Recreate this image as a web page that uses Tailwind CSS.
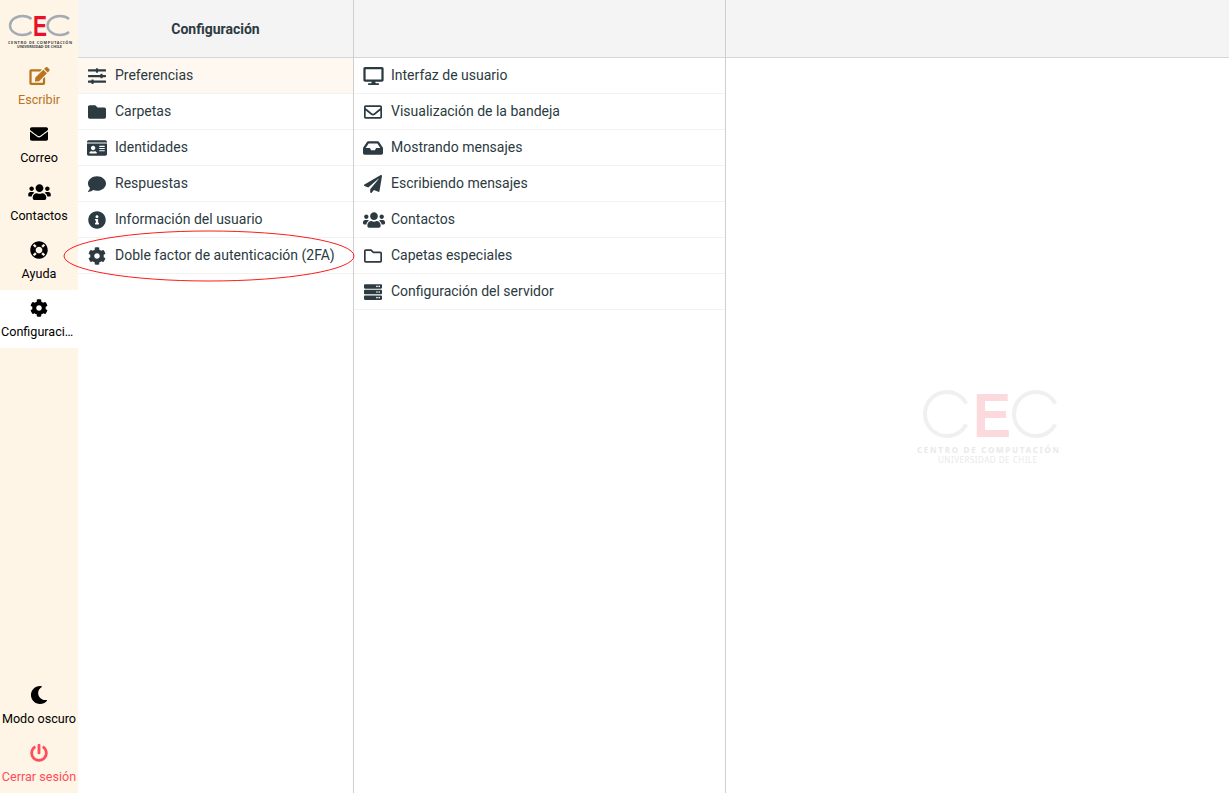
<!DOCTYPE html>
<html lang="es">
<head>
    <meta charset="UTF-8">
    <meta name="viewport" content="width=device-width, initial-scale=1.0">
    <title>Configuración</title>
    <script src="https://cdn.jsdelivr.net/npm/@tailwindcss/browser@4"></script>
</head>
<body class="h-screen overflow-hidden flex bg-white font-['Roboto',sans-serif] text-[14px] text-[#2c3a41]">

    <!-- Sidebar -->
    <aside class="w-[78px] h-full shrink-0 flex flex-col bg-[#fff5e6] text-[12.6px] text-black">
        <div class="h-[58px] pt-[15px] pl-[8px]">
            <svg class="w-[64px] h-[34px] overflow-visible" viewBox="0 0 64 34" fill="none">
                <ellipse cx="14.5" cy="10.5" rx="12.5" ry="9.5" stroke="#a3abb3" stroke-width="2.4" pathLength="100" stroke-dasharray="78 22" stroke-dashoffset="-11"/>
                <text x="32" y="20.5" text-anchor="middle" font-family="Liberation Sans" font-weight="700" font-size="29" fill="#e8112d" textLength="14" lengthAdjust="spacingAndGlyphs">E</text>
                <ellipse cx="52" cy="10.5" rx="12.5" ry="9.5" stroke="#a3abb3" stroke-width="2.4" pathLength="100" stroke-dasharray="78 22" stroke-dashoffset="-11"/>
                <text x="0" y="28.5" font-family="Noto Sans" font-weight="700" font-size="3.8" fill="#3a3f44" textLength="64">CENTRO DE COMPUTACIÓN</text>
                <text x="9" y="33" font-family="Noto Sans" font-weight="700" font-size="3.8" fill="#3a3f44" textLength="45">UNIVERSIDAD DE CHILE</text>
            </svg>
        </div>
        <a class="h-[58px] flex flex-col items-center pt-[9px] text-[#b8741f]">
            <svg class="h-[18px] w-[21px]" viewBox="0 0 576 512" fill="currentColor"><path d="M402.6 83.2l90.2 90.2c3.8 3.8 3.8 10 0 13.8L274.4 405.6l-92.8 10.3c-12.4 1.4-22.9-9.1-21.5-21.5l10.3-92.8L388.8 83.2c3.8-3.8 10-3.8 13.8 0zm162-22.9l-48.8-48.8c-15.2-15.2-39.9-15.2-55.2 0l-35.4 35.4c-3.8 3.8-3.8 10 0 13.8l90.2 90.2c3.8 3.8 10 3.8 13.8 0l35.4-35.4c15.2-15.3 15.2-40 0-55.2zM384 346.2V448H64V128h229.8c3.2 0 6.2-1.3 8.5-3.5l40-40c7.6-7.6 2.2-20.5-8.5-20.5H48C21.5 64 0 85.5 0 112v352c0 26.5 21.5 48 48 48h352c26.5 0 48-21.5 48-48V306.2c0-10.7-12.9-16-20.5-8.5l-40 40c-2.2 2.3-3.5 5.3-3.5 8.5z"/></svg>
            <span class="mt-[6px] leading-[18px]">Escribir</span>
        </a>
        <a class="h-[58px] flex flex-col items-center pt-[9px]">
            <svg class="h-[18px] w-[18px]" viewBox="0 0 512 512" fill="currentColor"><path d="M502.3 190.8c3.9-3.1 9.7-.2 9.7 4.7V400c0 26.5-21.5 48-48 48H48c-26.5 0-48-21.5-48-48V195.6c0-5 5.7-7.8 9.7-4.7 22.4 17.4 52.1 39.5 154.1 113.6 21.1 15.4 56.7 47.8 92.2 47.6 35.7.3 72-32.8 92.3-47.6 102-74.1 131.6-96.3 154-113.7zM256 320c23.2.4 56.6-29.2 73.4-41.4 132.7-96.3 142.8-104.7 173.4-128.7 5.8-4.5 9.2-11.5 9.2-18.9v-19c0-26.5-21.5-48-48-48H48C21.5 64 0 85.5 0 112v19c0 7.4 3.4 14.3 9.2 18.9 30.6 23.9 40.7 32.4 173.4 128.7 16.8 12.2 50.2 41.8 73.4 41.4z"/></svg>
            <span class="mt-[6px] leading-[18px]">Correo</span>
        </a>
        <a class="h-[58px] flex flex-col items-center pt-[9px]">
            <svg class="h-[18px] w-[23px]" viewBox="0 0 640 512" fill="currentColor"><path d="M96 224c35.3 0 64-28.7 64-64s-28.7-64-64-64-64 28.7-64 64 28.7 64 64 64zm448 0c35.3 0 64-28.7 64-64s-28.7-64-64-64-64 28.7-64 64 28.7 64 64 64zm32 32h-64c-17.6 0-33.5 7.1-45.1 18.6 40.3 22.1 68.9 62 75.1 109.4h66c17.7 0 32-14.3 32-32v-32c0-35.3-28.7-64-64-64zm-256 0c61.9 0 112-50.1 112-112S381.9 32 320 32 208 82.1 208 144s50.1 112 112 112zm76.8 32h-8.3c-20.8 10-43.9 16-68.5 16s-47.6-6-68.5-16h-8.3C179.6 288 128 339.6 128 403.2V432c0 26.5 21.5 48 48 48h288c26.5 0 48-21.5 48-48v-28.8c0-63.6-51.6-115.2-115.2-115.2zm-223.7-13.4C161.5 263.1 145.6 256 128 256H64c-35.3 0-64 28.7-64 64v32c0 17.7 14.3 32 32 32h65.9c6.3-47.4 34.9-87.3 75.2-109.4z"/></svg>
            <span class="mt-[6px] leading-[18px]">Contactos</span>
        </a>
        <a class="h-[58px] flex flex-col items-center pt-[9px]">
            <svg class="h-[18px] w-[18px]" viewBox="0 0 512 512" fill="currentColor"><path d="M256 8C119.033 8 8 119.033 8 256s111.033 248 248 248 248-111.033 248-248S392.967 8 256 8zm173.696 119.559l-63.399 63.399c-10.987-18.559-26.67-34.252-45.255-45.255l63.399-63.399a218.396 218.396 0 0 1 45.255 45.255zM256 352c-53.019 0-96-42.981-96-96s42.981-96 96-96 96 42.981 96 96-42.981 96-96 96zM127.559 82.304l63.399 63.399c-18.559 10.987-34.252 26.67-45.255 45.255l-63.399-63.399a218.372 218.372 0 0 1 45.255-45.255zM82.304 384.441l63.399-63.399c10.987 18.559 26.67 34.252 45.255 45.255l-63.399 63.399a218.396 218.396 0 0 1-45.255-45.255zm302.137 45.255l-63.399-63.399c18.559-10.987 34.252-26.67 45.255-45.255l63.399 63.399a218.403 218.403 0 0 1-45.255 45.255z"/></svg>
            <span class="mt-[6px] leading-[18px]">Ayuda</span>
        </a>
        <a class="h-[58px] flex flex-col items-center pt-[9px] bg-white">
            <svg class="h-[18px] w-[18px]" viewBox="0 0 512 512" fill="currentColor"><path d="M487.4 315.7l-42.6-24.6c4.3-23.2 4.3-47 0-70.2l42.6-24.6c4.9-2.8 7.1-8.6 5.5-14-11.1-35.6-30-67.8-54.7-94.6-3.8-4.1-10-5.1-14.8-2.3L380.8 110c-17.9-15.4-38.5-27.3-60.8-35.1V25.8c0-5.6-3.9-10.5-9.4-11.7-36.7-8.2-74.3-7.8-109.2 0-5.5 1.2-9.4 6.1-9.4 11.7V75c-22.2 7.9-42.8 19.8-60.8 35.1L88.7 85.5c-4.9-2.8-11-1.9-14.8 2.3-24.7 26.7-43.6 58.9-54.7 94.6-1.7 5.4.6 11.2 5.5 14L67.3 221c-4.3 23.2-4.3 47 0 70.2l-42.6 24.6c-4.9 2.8-7.1 8.6-5.5 14 11.1 35.6 30 67.8 54.7 94.6 3.8 4.1 10 5.1 14.8 2.3l42.6-24.6c17.9 15.4 38.5 27.3 60.8 35.1v49.2c0 5.6 3.9 10.5 9.4 11.7 36.7 8.2 74.3 7.8 109.2 0 5.5-1.2 9.4-6.1 9.4-11.7v-49.2c22.2-7.9 42.8-19.8 60.8-35.1l42.6 24.6c4.9 2.8 11 1.9 14.8-2.3 24.7-26.7 43.6-58.9 54.7-94.6 1.5-5.5-.7-11.3-5.6-14.1zM256 336c-44.1 0-80-35.9-80-80s35.9-80 80-80 80 35.9 80 80-35.9 80-80 80z"/></svg>
            <span class="mt-[6px] leading-[18px] w-full px-[1px] text-center truncate">Configuración</span>
        </a>
        <a class="mt-auto h-[58px] flex flex-col items-center pt-[9px]">
            <svg class="h-[18px] w-[18px]" viewBox="0 0 512 512" fill="currentColor"><path d="M283.211 512c78.962 0 151.079-35.925 198.857-94.792 7.068-8.708-.639-21.43-11.562-19.35-124.203 23.654-238.262-71.576-238.262-196.954 0-72.222 38.662-138.635 101.498-174.394 9.686-5.512 7.25-20.197-3.756-22.23A258.156 258.156 0 0 0 283.211 0c-141.309 0-256 114.511-256 256 0 141.309 114.511 256 256 256z"/></svg>
            <span class="mt-[6px] leading-[18px] whitespace-nowrap">Modo oscuro</span>
        </a>
        <a class="h-[58px] flex flex-col items-center pt-[9px] text-[#ff4d5a]">
            <svg class="h-[18px] w-[18px]" viewBox="0 0 512 512" fill="currentColor"><path d="M400 54.1c63 45 104 118.6 104 201.9 0 136.8-110.8 247.7-247.5 248C120 504.3 8.2 393 8 256.4 7.9 173.1 48.9 99.3 111.8 54.2c11.7-8.3 28-4.8 35 7.7L162.6 90c5.9 10.5 3.1 23.8-6.6 31-41.5 30.8-68 79.6-68 134.9-.1 92.3 74.5 168.1 168 168.1 91.6 0 168.6-74.2 168-169.1-.3-51.8-24.7-101.8-68.1-134-9.7-7.2-12.4-20.5-6.5-30.9l15.8-28.1c7-12.4 23.2-16.1 34.8-7.8zM296 264V24c0-13.3-10.7-24-24-24h-32c-13.3 0-24 10.7-24 24v240c0 13.3 10.7 24 24 24h32c13.3 0 24-10.7 24-24z"/></svg>
            <span class="mt-[6px] leading-[18px] whitespace-nowrap">Cerrar sesión</span>
        </a>
    </aside>

    <!-- First list -->
    <section class="relative w-[276px] h-full shrink-0 flex flex-col border-r border-[#cfcfcf]">
        <header class="h-[58px] shrink-0 flex items-center justify-center pt-[2px] bg-[#f4f4f4] border-b border-[#d6d6d6] font-bold">Configuración</header>
        <ul>
            <li class="h-[36px] flex items-center pl-[10px] border-b border-[#f2f2f2] bg-[#fff8f0]">
                <span class="w-[27px] shrink-0"><svg class="h-[18px] w-[18px]" viewBox="0 0 512 512" fill="currentColor"><path d="M496 384H160v-16c0-8.8-7.2-16-16-16h-32c-8.8 0-16 7.2-16 16v16H16c-8.8 0-16 7.2-16 16v32c0 8.8 7.2 16 16 16h80v16c0 8.8 7.2 16 16 16h32c8.8 0 16-7.2 16-16v-16h336c8.8 0 16-7.2 16-16v-32c0-8.8-7.2-16-16-16zm0-160h-80v-16c0-8.8-7.2-16-16-16h-32c-8.8 0-16 7.2-16 16v16H16c-8.8 0-16 7.2-16 16v32c0 8.8 7.2 16 16 16h336v16c0 8.8 7.2 16 16 16h32c8.8 0 16-7.2 16-16v-16h80c8.8 0 16-7.2 16-16v-32c0-8.8-7.2-16-16-16zm0-160H288V48c0-8.8-7.2-16-16-16h-32c-8.8 0-16 7.2-16 16v16H16C7.2 64 0 71.2 0 80v32c0 8.8 7.2 16 16 16h208v16c0 8.8 7.2 16 16 16h32c8.8 0 16-7.2 16-16v-16h208c8.8 0 16-7.2 16-16V80c0-8.8-7.2-16-16-16z"/></svg></span>
                Preferencias
            </li>
            <li class="h-[36px] flex items-center pl-[10px] border-b border-[#f2f2f2]">
                <span class="w-[27px] shrink-0"><svg class="h-[18px] w-[18px]" viewBox="0 0 512 512" fill="currentColor"><path d="M464 128H272l-64-64H48C21.49 64 0 85.49 0 112v288c0 26.51 21.49 48 48 48h416c26.51 0 48-21.49 48-48V176c0-26.51-21.49-48-48-48z"/></svg></span>
                Carpetas
            </li>
            <li class="h-[36px] flex items-center pl-[9px] border-b border-[#f2f2f2]">
                <span class="w-[28px] shrink-0"><svg class="h-[18px] w-[20px]" viewBox="0 0 576 512" fill="currentColor"><path d="M528 32H48C21.5 32 0 53.5 0 80v16h576V80c0-26.5-21.5-48-48-48zM0 432c0 26.5 21.5 48 48 48h480c26.5 0 48-21.5 48-48V128H0v304zm352-232c0-4.4 3.6-8 8-8h144c4.4 0 8 3.6 8 8v16c0 4.4-3.6 8-8 8H360c-4.4 0-8-3.6-8-8v-16zm0 64c0-4.4 3.6-8 8-8h144c4.4 0 8 3.6 8 8v16c0 4.4-3.6 8-8 8H360c-4.4 0-8-3.6-8-8v-16zm0 64c0-4.4 3.6-8 8-8h144c4.4 0 8 3.6 8 8v16c0 4.4-3.6 8-8 8H360c-4.4 0-8-3.6-8-8v-16zM176 192c35.3 0 64 28.7 64 64s-28.7 64-64 64-64-28.7-64-64 28.7-64 64-64zM67.1 396.2C75.5 370.5 99.6 352 128 352h8.2c12.3 5.1 25.7 8 39.8 8s27.6-2.9 39.8-8h8.2c28.4 0 52.5 18.5 60.9 44.2 3.2 9.9-5.2 19.8-15.6 19.8H82.7c-10.4 0-18.8-10-15.6-19.8z"/></svg></span>
                Identidades
            </li>
            <li class="h-[36px] flex items-center pl-[10px] border-b border-[#f2f2f2]">
                <span class="w-[27px] shrink-0"><svg class="h-[18px] w-[18px]" viewBox="0 0 512 512" fill="currentColor"><path d="M256 32C114.6 32 0 125.1 0 240c0 49.6 21.4 95 57 130.7C44.5 421.1 2.7 466 2.2 466.5c-2.2 2.3-2.8 5.7-1.5 8.7S4.8 480 8 480c66.3 0 116-31.8 140.6-51.4 32.7 12.3 69 19.4 107.4 19.4 141.4 0 256-93.1 256-208S397.4 32 256 32z"/></svg></span>
                Respuestas
            </li>
            <li class="h-[36px] flex items-center pl-[10px] border-b border-[#f2f2f2]">
                <span class="w-[27px] shrink-0"><svg class="h-[18px] w-[18px]" viewBox="0 0 512 512" fill="currentColor"><path d="M256 8C119.043 8 8 119.083 8 256c0 136.997 111.043 248 248 248s248-111.003 248-248C504 119.083 392.957 8 256 8zm0 110c23.196 0 42 18.804 42 42s-18.804 42-42 42-42-18.804-42-42 18.804-42 42-42zm56 254c0 6.627-5.373 12-12 12h-88c-6.627 0-12-5.373-12-12v-24c0-6.627 5.373-12 12-12h12v-64h-12c-6.627 0-12-5.373-12-12v-24c0-6.627 5.373-12 12-12h64c6.627 0 12 5.373 12 12v100h12c6.627 0 12 5.373 12 12v24z"/></svg></span>
                Información del usuario
            </li>
            <li class="h-[36px] flex items-center pl-[10px] border-b border-[#f2f2f2] whitespace-nowrap">
                <span class="w-[27px] shrink-0"><svg class="h-[18px] w-[18px]" viewBox="0 0 512 512" fill="currentColor"><path d="M487.4 315.7l-42.6-24.6c4.3-23.2 4.3-47 0-70.2l42.6-24.6c4.9-2.8 7.1-8.6 5.5-14-11.1-35.6-30-67.8-54.7-94.6-3.8-4.1-10-5.1-14.8-2.3L380.8 110c-17.9-15.4-38.5-27.3-60.8-35.1V25.8c0-5.6-3.9-10.5-9.4-11.7-36.7-8.2-74.3-7.8-109.2 0-5.5 1.2-9.4 6.1-9.4 11.7V75c-22.2 7.9-42.8 19.8-60.8 35.1L88.7 85.5c-4.9-2.8-11-1.9-14.8 2.3-24.7 26.7-43.6 58.9-54.7 94.6-1.7 5.4.6 11.2 5.5 14L67.3 221c-4.3 23.2-4.3 47 0 70.2l-42.6 24.6c-4.9 2.8-7.1 8.6-5.5 14 11.1 35.6 30 67.8 54.7 94.6 3.8 4.1 10 5.1 14.8 2.3l42.6-24.6c17.9 15.4 38.5 27.3 60.8 35.1v49.2c0 5.6 3.9 10.5 9.4 11.7 36.7 8.2 74.3 7.8 109.2 0 5.5-1.2 9.4-6.1 9.4-11.7v-49.2c22.2-7.9 42.8-19.8 60.8-35.1l42.6 24.6c4.9 2.8 11 1.9 14.8-2.3 24.7-26.7 43.6-58.9 54.7-94.6 1.5-5.5-.7-11.3-5.6-14.1zM256 336c-44.1 0-80-35.9-80-80s35.9-80 80-80 80 35.9 80 80-35.9 80-80 80z"/></svg></span>
                Doble factor de autenticación (2FA)
            </li>
        </ul>
        <!-- red annotation round the 2FA row -->
        <svg class="absolute left-[-15px] top-[230px] w-[292px] h-[52px] overflow-visible pointer-events-none" viewBox="0 0 292 52" fill="none"><ellipse cx="146" cy="26" rx="145" ry="25" stroke="#ff0000" stroke-width="0.9"/></svg>
    </section>

    <!-- Second list -->
    <section class="w-[372px] h-full shrink-0 flex flex-col border-r border-[#cfcfcf]">
        <header class="h-[58px] shrink-0 bg-[#f4f4f4] border-b border-[#d6d6d6]"></header>
        <ul>
            <li class="h-[36px] flex items-center pl-[9px] border-b border-[#f2f2f2]">
                <span class="w-[28px] shrink-0"><svg class="h-[18px] w-[21px]" viewBox="0 0 576 512" fill="currentColor"><path d="M528 0H48C21.5 0 0 21.5 0 48v320c0 26.5 21.5 48 48 48h192l-16 48h-72c-13.3 0-24 10.7-24 24s10.7 24 24 24h272c13.3 0 24-10.7 24-24s-10.7-24-24-24h-72l-16-48h192c26.5 0 48-21.5 48-48V48c0-26.5-21.5-48-48-48zm-16 352H64V64h448v288z"/></svg></span>
                Interfaz de usuario
            </li>
            <li class="h-[36px] flex items-center pl-[10px] border-b border-[#f2f2f2]">
                <span class="w-[27px] shrink-0"><svg class="h-[18px] w-[18px]" viewBox="0 0 512 512" fill="currentColor"><path d="M464 64H48C21.49 64 0 85.49 0 112v288c0 26.51 21.49 48 48 48h416c26.51 0 48-21.49 48-48V112c0-26.51-21.49-48-48-48zm0 48v40.805c-22.422 18.259-58.168 46.651-134.587 106.49-16.841 13.247-50.201 45.072-73.413 44.701-23.208.375-56.579-31.459-73.413-44.701C106.18 199.465 70.425 171.067 48 152.805V112h416zM48 400V214.398c22.914 18.251 55.409 43.862 104.938 82.646 21.857 17.205 60.134 55.186 103.062 54.955 42.717.231 80.509-37.199 103.053-54.947 49.528-38.783 82.032-64.401 104.947-82.653V400H48z"/></svg></span>
                Visualización de la bandeja
            </li>
            <li class="h-[36px] flex items-center pl-[9px] border-b border-[#f2f2f2]">
                <span class="w-[28px] shrink-0"><svg class="h-[18px] w-[20px]" viewBox="0 0 576 512" fill="currentColor"><path d="M567.938 243.908L462.25 85.374A48.003 48.003 0 0 0 422.311 64H153.689a48 48 0 0 0-39.938 21.374L8.062 243.908A47.994 47.994 0 0 0 0 270.533V400c0 26.51 21.49 48 48 48h480c26.51 0 48-21.49 48-48V270.533a47.994 47.994 0 0 0-8.062-26.625zM162.252 128h251.497l85.333 128H376l-32 64H232l-32-64H76.918l85.334-128z"/></svg></span>
                Mostrando mensajes
            </li>
            <li class="h-[36px] flex items-center pl-[10px] border-b border-[#f2f2f2]">
                <span class="w-[27px] shrink-0"><svg class="h-[18px] w-[18px]" viewBox="0 0 512 512" fill="currentColor"><path d="M476 3.2L12.5 270.6c-18.1 10.4-15.8 35.6 2.2 43.2L121 358.4l287.3-253.2c5.5-4.9 13.3 2.6 8.6 8.3L176 407v80.5c0 23.6 28.5 32.9 42.5 15.8L282 426l124.6 52.2c14.2 6 30.4-2.9 33-18.2l72-432C515 7.8 493.3-6.8 476 3.2z"/></svg></span>
                Escribiendo mensajes
            </li>
            <li class="h-[36px] flex items-center pl-[9px] border-b border-[#f2f2f2]">
                <span class="w-[28px] shrink-0"><svg class="h-[18px] w-[22px]" viewBox="0 0 640 512" fill="currentColor"><path d="M96 224c35.3 0 64-28.7 64-64s-28.7-64-64-64-64 28.7-64 64 28.7 64 64 64zm448 0c35.3 0 64-28.7 64-64s-28.7-64-64-64-64 28.7-64 64 28.7 64 64 64zm32 32h-64c-17.6 0-33.5 7.1-45.1 18.6 40.3 22.1 68.9 62 75.1 109.4h66c17.7 0 32-14.3 32-32v-32c0-35.3-28.7-64-64-64zm-256 0c61.9 0 112-50.1 112-112S381.9 32 320 32 208 82.1 208 144s50.1 112 112 112zm76.8 32h-8.3c-20.8 10-43.9 16-68.5 16s-47.6-6-68.5-16h-8.3C179.6 288 128 339.6 128 403.2V432c0 26.5 21.5 48 48 48h288c26.5 0 48-21.5 48-48v-28.8c0-63.6-51.6-115.2-115.2-115.2zm-223.7-13.4C161.5 263.1 145.6 256 128 256H64c-35.3 0-64 28.7-64 64v32c0 17.7 14.3 32 32 32h65.9c6.3-47.4 34.9-87.3 75.2-109.4z"/></svg></span>
                Contactos
            </li>
            <li class="h-[36px] flex items-center pl-[10px] border-b border-[#f2f2f2]">
                <span class="w-[27px] shrink-0"><svg class="h-[18px] w-[18px]" viewBox="0 0 512 512" fill="currentColor"><path d="M464 128H272l-54.63-54.63c-6-6-14.14-9.37-22.63-9.37H48C21.49 64 0 85.49 0 112v288c0 26.51 21.49 48 48 48h416c26.51 0 48-21.49 48-48V176c0-26.51-21.49-48-48-48zm0 272H48V112h140.12l54.63 54.63c6 6 14.14 9.37 22.63 9.37H464v224z"/></svg></span>
                Capetas especiales
            </li>
            <li class="h-[36px] flex items-center pl-[10px] border-b border-[#f2f2f2]">
                <span class="w-[27px] shrink-0"><svg class="h-[18px] w-[18px]" viewBox="0 0 512 512" fill="currentColor"><path d="M480 160H32c-17.673 0-32-14.327-32-32V64c0-17.673 14.327-32 32-32h448c17.673 0 32 14.327 32 32v64c0 17.673-14.327 32-32 32zm-48-88c-13.255 0-24 10.745-24 24s10.745 24 24 24 24-10.745 24-24-10.745-24-24-24zm-64 0c-13.255 0-24 10.745-24 24s10.745 24 24 24 24-10.745 24-24-10.745-24-24-24zm112 248H32c-17.673 0-32-14.327-32-32v-64c0-17.673 14.327-32 32-32h448c17.673 0 32 14.327 32 32v64c0 17.673-14.327 32-32 32zm-48-88c-13.255 0-24 10.745-24 24s10.745 24 24 24 24-10.745 24-24-10.745-24-24-24zm-64 0c-13.255 0-24 10.745-24 24s10.745 24 24 24 24-10.745 24-24-10.745-24-24-24zm112 248H32c-17.673 0-32-14.327-32-32v-64c0-17.673 14.327-32 32-32h448c17.673 0 32 14.327 32 32v64c0 17.673-14.327 32-32 32zm-48-88c-13.255 0-24 10.745-24 24s10.745 24 24 24 24-10.745 24-24-10.745-24-24-24zm-64 0c-13.255 0-24 10.745-24 24s10.745 24 24 24 24-10.745 24-24-10.745-24-24-24z"/></svg></span>
                Configuración del servidor
            </li>
        </ul>
    </section>

    <!-- Empty preview with watermark -->
    <section class="flex-1 h-full flex flex-col">
        <header class="h-[58px] shrink-0 bg-[#f4f4f4] border-b border-[#d6d6d6]"></header>
        <div class="flex-1 flex items-center justify-center pl-[22px] pt-[4px]">
            <svg class="w-[143px] h-[75px] overflow-visible" viewBox="0 0 143 75" fill="none">
                <circle cx="30" cy="24" r="22" stroke="#eff0f1" stroke-width="4" pathLength="100" stroke-dasharray="84 16" stroke-dashoffset="-8"/>
                <text x="75" y="47" text-anchor="middle" font-family="Liberation Sans" font-weight="700" font-size="63" fill="#fcd9dd" textLength="38" lengthAdjust="spacingAndGlyphs">E</text>
                <circle cx="119" cy="24" r="22" stroke="#eff0f1" stroke-width="4" pathLength="100" stroke-dasharray="84 16" stroke-dashoffset="-8"/>
                <text x="0" y="63" font-family="Noto Sans" font-weight="700" font-size="8" fill="#e9e9e9" textLength="142">CENTRO DE COMPUTACIÓN</text>
                <text x="21" y="73" font-family="Noto Sans" font-size="8" fill="#e9e9e9" textLength="99">UNIVERSIDAD DE CHILE</text>
            </svg>
        </div>
    </section>
</body>
</html>
